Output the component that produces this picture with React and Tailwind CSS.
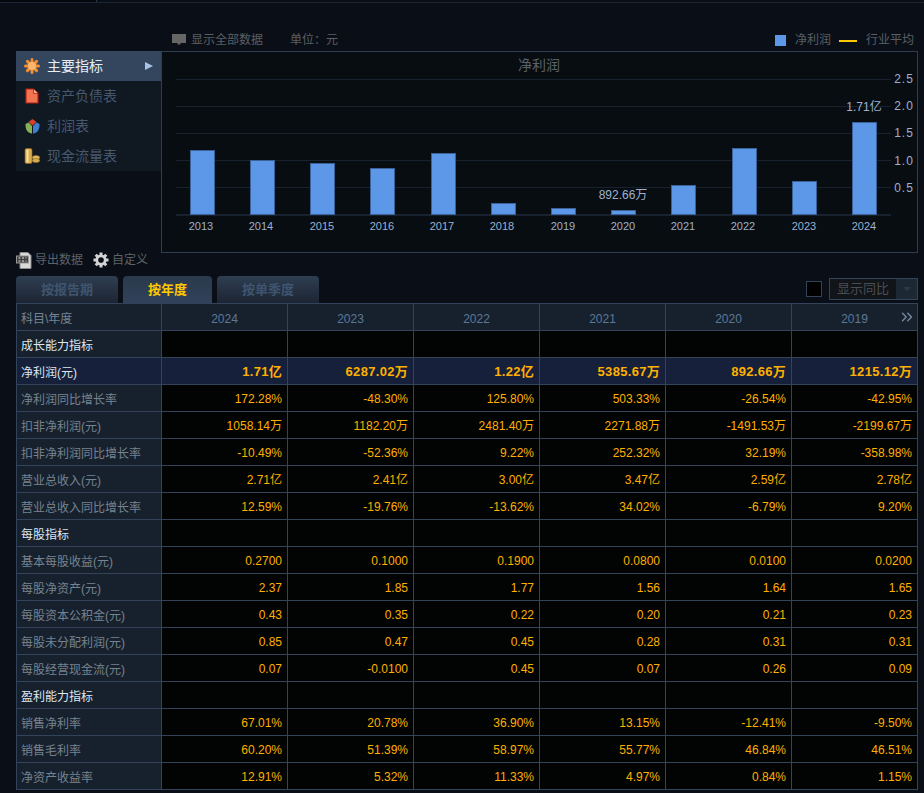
import { ChevronsRight } from 'lucide-react';

const FONT = '"Liberation Sans", "Noto Sans CJK SC", sans-serif';

const years = ['2024', '2023', '2022', '2021', '2020', '2019'];

const rows = [
  { label: '成长能力指标', section: true },
  { label: '净利润(元)', hot: true, values: ['1.71亿', '6287.02万', '1.22亿', '5385.67万', '892.66万', '1215.12万'] },
  { label: '净利润同比增长率', values: ['172.28%', '-48.30%', '125.80%', '503.33%', '-26.54%', '-42.95%'] },
  { label: '扣非净利润(元)', values: ['1058.14万', '1182.20万', '2481.40万', '2271.88万', '-1491.53万', '-2199.67万'] },
  { label: '扣非净利润同比增长率', values: ['-10.49%', '-52.36%', '9.22%', '252.32%', '32.19%', '-358.98%'] },
  { label: '营业总收入(元)', values: ['2.71亿', '2.41亿', '3.00亿', '3.47亿', '2.59亿', '2.78亿'] },
  { label: '营业总收入同比增长率', values: ['12.59%', '-19.76%', '-13.62%', '34.02%', '-6.79%', '9.20%'] },
  { label: '每股指标', section: true },
  { label: '基本每股收益(元)', values: ['0.2700', '0.1000', '0.1900', '0.0800', '0.0100', '0.0200'] },
  { label: '每股净资产(元)', values: ['2.37', '1.85', '1.77', '1.56', '1.64', '1.65'] },
  { label: '每股资本公积金(元)', values: ['0.43', '0.35', '0.22', '0.20', '0.21', '0.23'] },
  { label: '每股未分配利润(元)', values: ['0.85', '0.47', '0.45', '0.28', '0.31', '0.31'] },
  { label: '每股经营现金流(元)', values: ['0.07', '-0.0100', '0.45', '0.07', '0.26', '0.09'] },
  { label: '盈利能力指标', section: true },
  { label: '销售净利率', values: ['67.01%', '20.78%', '36.90%', '13.15%', '-12.41%', '-9.50%'] },
  { label: '销售毛利率', values: ['60.20%', '51.39%', '58.97%', '55.77%', '46.84%', '46.51%'] },
  { label: '净资产收益率', values: ['12.91%', '5.32%', '11.33%', '4.97%', '0.84%', '1.15%'] },
];

const bars = [
  { year: '2013', x: 190, cx: 201, top: 150 },
  { year: '2014', x: 250, cx: 261, top: 160 },
  { year: '2015', x: 310, cx: 322, top: 163 },
  { year: '2016', x: 370, cx: 382, top: 168 },
  { year: '2017', x: 431, cx: 442, top: 153 },
  { year: '2018', x: 491, cx: 502, top: 203 },
  { year: '2019', x: 551, cx: 563, top: 208 },
  { year: '2020', x: 611, cx: 623, top: 210 },
  { year: '2021', x: 671, cx: 683, top: 185 },
  { year: '2022', x: 732, cx: 743, top: 148 },
  { year: '2023', x: 792, cx: 804, top: 181 },
  { year: '2024', x: 852, cx: 864, top: 122 },
];

function StarIcon() {
  return (
    <svg width="16" height="16" viewBox="0 0 16 16">
      <g stroke="#f28f33" strokeWidth="3" strokeLinecap="round">
        <path d="M8 1.500v13M1.500 8h13M3.400 3.400l9.200 9.200M12.600 3.400l-9.200 9.200" />
      </g>
      <circle cx="8" cy="8" r="4" fill="#ffb56b" />
    </svg>
  );
}

function SheetIcon() {
  return (
    <svg width="14" height="16" viewBox="0 0 14 16">
      <path d="M1 1h7.500L13 5.500V15H1z" fill="#f0744e" stroke="#b81c14" strokeWidth="1.200" />
      <path d="M8.500 1v4.500H13" fill="#f8b197" stroke="#b81c14" strokeWidth="0.800" />
    </svg>
  );
}

function CubeIcon() {
  return (
    <svg width="15" height="15" viewBox="0 0 15 15">
      <path d="M7.500 0 11.500 3 7.500 6.500 3.500 3z" fill="#d8402c" />
      <path d="M0.500 5 3.500 3.500 7 7v7.500C3 14.500 0.300 11 0.500 5z" fill="#86b255" />
      <path d="M14.500 5 11.500 3.500 8 7v7.500c4 0 6.700-3.500 6.500-9.500z" fill="#3f7fd0" />
    </svg>
  );
}

function CoinsIcon() {
  return (
    <svg width="16" height="16" viewBox="0 0 16 16">
      <rect x="1" y="0.500" width="7" height="15" rx="1.500" fill="#d9ad4f" stroke="#8f6c22" strokeWidth="0.600" />
      <rect x="2.500" y="1.500" width="2" height="13" fill="#f6e09a" />
      <ellipse cx="12" cy="9.500" rx="3.700" ry="2" fill="#e3bb5d" stroke="#8f6c22" strokeWidth="0.600" />
      <ellipse cx="12" cy="12.500" rx="3.700" ry="2" fill="#d9ad4f" stroke="#8f6c22" strokeWidth="0.600" />
    </svg>
  );
}

function ExportIcon() {
  return (
    <svg width="16" height="17" viewBox="0 0 16 17">
      <path d="M4 0.500h8l3 3v13H4z" fill="#d9d9d9" stroke="#8a8a8a" />
      <rect x="0.500" y="4" width="12" height="7" fill="#3f3f3f" stroke="#9a9a9a" />
      <path d="M2.500 6h2M6 6h2M9.500 6h1M2.500 9h2M6 9h2M9.500 9h1" stroke="#e5e5e5" />
    </svg>
  );
}

function GearIcon() {
  return (
    <svg width="16" height="16" viewBox="0 0 16 16">
      <g stroke="#d4d4d4" strokeWidth="3">
        <path d="M8 0.500v15M0.500 8h15M2.700 2.700l10.600 10.600M13.300 2.700 2.700 13.300" />
      </g>
      <circle cx="8" cy="8" r="5.500" fill="#d4d4d4" />
      <circle cx="8" cy="8" r="2.800" fill="#0a0f17" />
    </svg>
  );
}

function Chart() {
  // svg coords are page coords minus the box offset (161, 51)
  return (
    <svg width="757" height="202" className="block" style={{ fontFamily: FONT }}>
      <text x="378" y="19" fontSize="14" fill="#5b6168" textAnchor="middle">净利润</text>
      {[28, 55, 82, 109, 136].map((y) => (
        <line key={y} x1="15" x2="730" y1={y + 0.5} y2={y + 0.5} stroke="#18222e" />
      ))}
      <rect x="15" y="163" width="715" height="2" fill="#18222e" />
      {['2.5', '2.0', '1.5', '1.0', '0.5'].map((t, i) => (
        <text key={t} x="743" y={32 + i * 27.2} fontSize="12" letterSpacing="1" fill="#9db1cf" textAnchor="middle">{t}</text>
      ))}
      {bars.map((b) => (
        <g key={b.year}>
          <rect x={b.x - 161 + 0.5} y={b.top - 51 + 0.5} width="24" height={214 - b.top} fill="#5c97e8" stroke="#3a6299" />
          <text x={b.cx - 161} y="179" fontSize="11" fill="#9db1cf" textAnchor="middle">{b.year}</text>
        </g>
      ))}
      <text x="462" y="148" fontSize="12" fill="#9db1cf" textAnchor="middle">892.66万</text>
      <text x="703" y="60" fontSize="12" fill="#9db1cf" textAnchor="middle">1.71亿</text>
    </svg>
  );
}

export default function App() {
  const menu = [
    { name: '主要指标', icon: <StarIcon />, active: true },
    { name: '资产负债表', icon: <SheetIcon /> },
    { name: '利润表', icon: <CubeIcon /> },
    { name: '现金流量表', icon: <CoinsIcon /> },
  ];

  return (
    <div className="h-[793px] overflow-hidden bg-[#0a0f17] text-xs" style={{ fontFamily: FONT }}>
      {/* top strip */}
      <div className="flex h-[3px] border-b border-[#1a2633]">
        <div className="w-[97px] border-r border-[#2a3543] bg-[#05080c]" />
      </div>

      {/* chart toolbar */}
      <div className="flex h-[48px] items-end pb-[3px] pl-[172px] pr-[10px] text-[#5b5f64]">
        <svg width="14" height="11" viewBox="0 0 14 11" className="mb-[3px] mr-[5px]">
          <path d="M0 0h14v9H8.500v1.500h-3V9H0z" fill="#666" />
        </svg>
        <span>显示全部数据</span>
        <span className="ml-[27px]">单位：元</span>
        <span className="mb-[2px] ml-auto mr-[9px] h-[11px] w-[11px] bg-[#5c97e8]" />
        <span>净利润</span>
        <span className="mb-[6px] ml-[8px] mr-[9px] h-[2px] w-[18px] bg-[#ffc800]" />
        <span>行业平均</span>
      </div>

      {/* menu + chart */}
      <div className="flex pl-[16px] pr-[6px]">
        <div className="h-[120px] w-[145px] bg-[#101822]">
          {menu.map((m) => (
            <div
              key={m.name}
              className={`flex h-[30px] items-center pl-[8px] text-sm ${m.active ? 'bg-[#33465e] text-[#e8eef6]' : 'text-[#45586f]'}`}
            >
              <span className="flex w-[16px] justify-center">{m.icon}</span>
              <span className="ml-[7px]">{m.name}</span>
              {m.active && <span className="ml-auto mr-[8px] h-0 w-0 border-y-[4px] border-l-[8px] border-y-transparent border-l-[#a9c3e8]" />}
            </div>
          ))}
        </div>
        <div className="h-[202px] flex-1 border border-[#2e3d50] bg-[#080d12] [&>svg]:-m-px">
          <Chart />
        </div>
      </div>

      {/* export row */}
      <div className="-mt-[1px] flex h-[24px] items-start pl-[16px] text-[#5e6267]">
        <ExportIcon />
        <span className="ml-[3px]">导出数据</span>
        <span className="ml-[10px]"><GearIcon /></span>
        <span className="ml-[3px]">自定义</span>
      </div>

      {/* tabs */}
      <div className="flex h-[27px] items-end pl-[16px] pr-[6px]">
        <div className="flex h-[27px] w-[102px] items-center justify-center rounded-t bg-gradient-to-b from-[#2f3e52] to-[#1c2533] text-[13px] font-bold text-[#3f556f]">按报告期</div>
        <div className="ml-[5px] flex h-[27px] w-[89px] items-center justify-center rounded-t bg-gradient-to-b from-[#2b394b] to-[#30425a] text-[13px] font-bold text-[#ffc800]">按年度</div>
        <div className="ml-[5px] flex h-[27px] w-[102px] items-center justify-center rounded-t bg-gradient-to-b from-[#2f3e52] to-[#1c2533] text-[13px] font-bold text-[#3f556f]">按单季度</div>
        <div className="mb-[6px] ml-auto h-[16px] w-[16px] border border-[#33435a] bg-black" />
        <div className="mb-[3px] ml-[7px] flex h-[22px] w-[89px] border border-[#33435a] bg-[#111418] text-[#4a4e54]">
          <span className="flex flex-1 items-center pl-[7px] text-[13px]">显示同比</span>
          <span className="flex w-[21px] items-center justify-center bg-[#1d2835]">
            <span className="h-0 w-0 border-x-[4px] border-t-[4px] border-x-transparent border-t-[#2e3a4a]" />
          </span>
        </div>
      </div>

      {/* table */}
      <div className="pl-[16px]">
        <table className="w-[901px] table-fixed border-collapse border border-[#33435a]">
          <colgroup>
            <col className="w-[145px]" />
            {years.map((y) => <col key={y} className="w-[126px]" />)}
          </colgroup>
          <tbody>
            <tr className="h-[27px] bg-[#17212e]">
              <td className="border border-[#33435a] pl-[4px] pt-[3px] text-[#76838f]">科目\年度</td>
              {years.map((y, i) => (
                <td key={y} className="relative border border-[#33435a] pt-[3px] text-center text-[#5d7896]">
                  {y}
                  {i === 5 && <ChevronsRight size={18} strokeWidth={2} className="absolute right-[1px] top-[4px] text-[#75869b]" />}
                </td>
              ))}
            </tr>
            {rows.map((r) => (
              <tr key={r.label} className="h-[27px]">
                <td className={`border border-[#33435a] pl-[4px] pt-[3px] ${r.hot ? 'bg-[#16203a] text-[#dfe6ee]' : 'bg-[#17212e]'} ${r.section ? 'text-[#dfe6ee]' : ''} ${!r.hot && !r.section ? 'text-[#76838f]' : ''}`}>
                  {r.label}
                </td>
                {years.map((y, i) => (
                  <td
                    key={y}
                    className={`border border-[#33435a] pr-[5px] pt-[2px] text-right ${r.hot ? 'bg-[#16203a] text-[13px] font-bold tracking-[0.3px]' : 'bg-[#020303]'} text-[#ffb000]`}
                  >
                    {r.values ? r.values[i] : ''}
                  </td>
                ))}
              </tr>
            ))}
          </tbody>
        </table>
      </div>
    </div>
  );
}
